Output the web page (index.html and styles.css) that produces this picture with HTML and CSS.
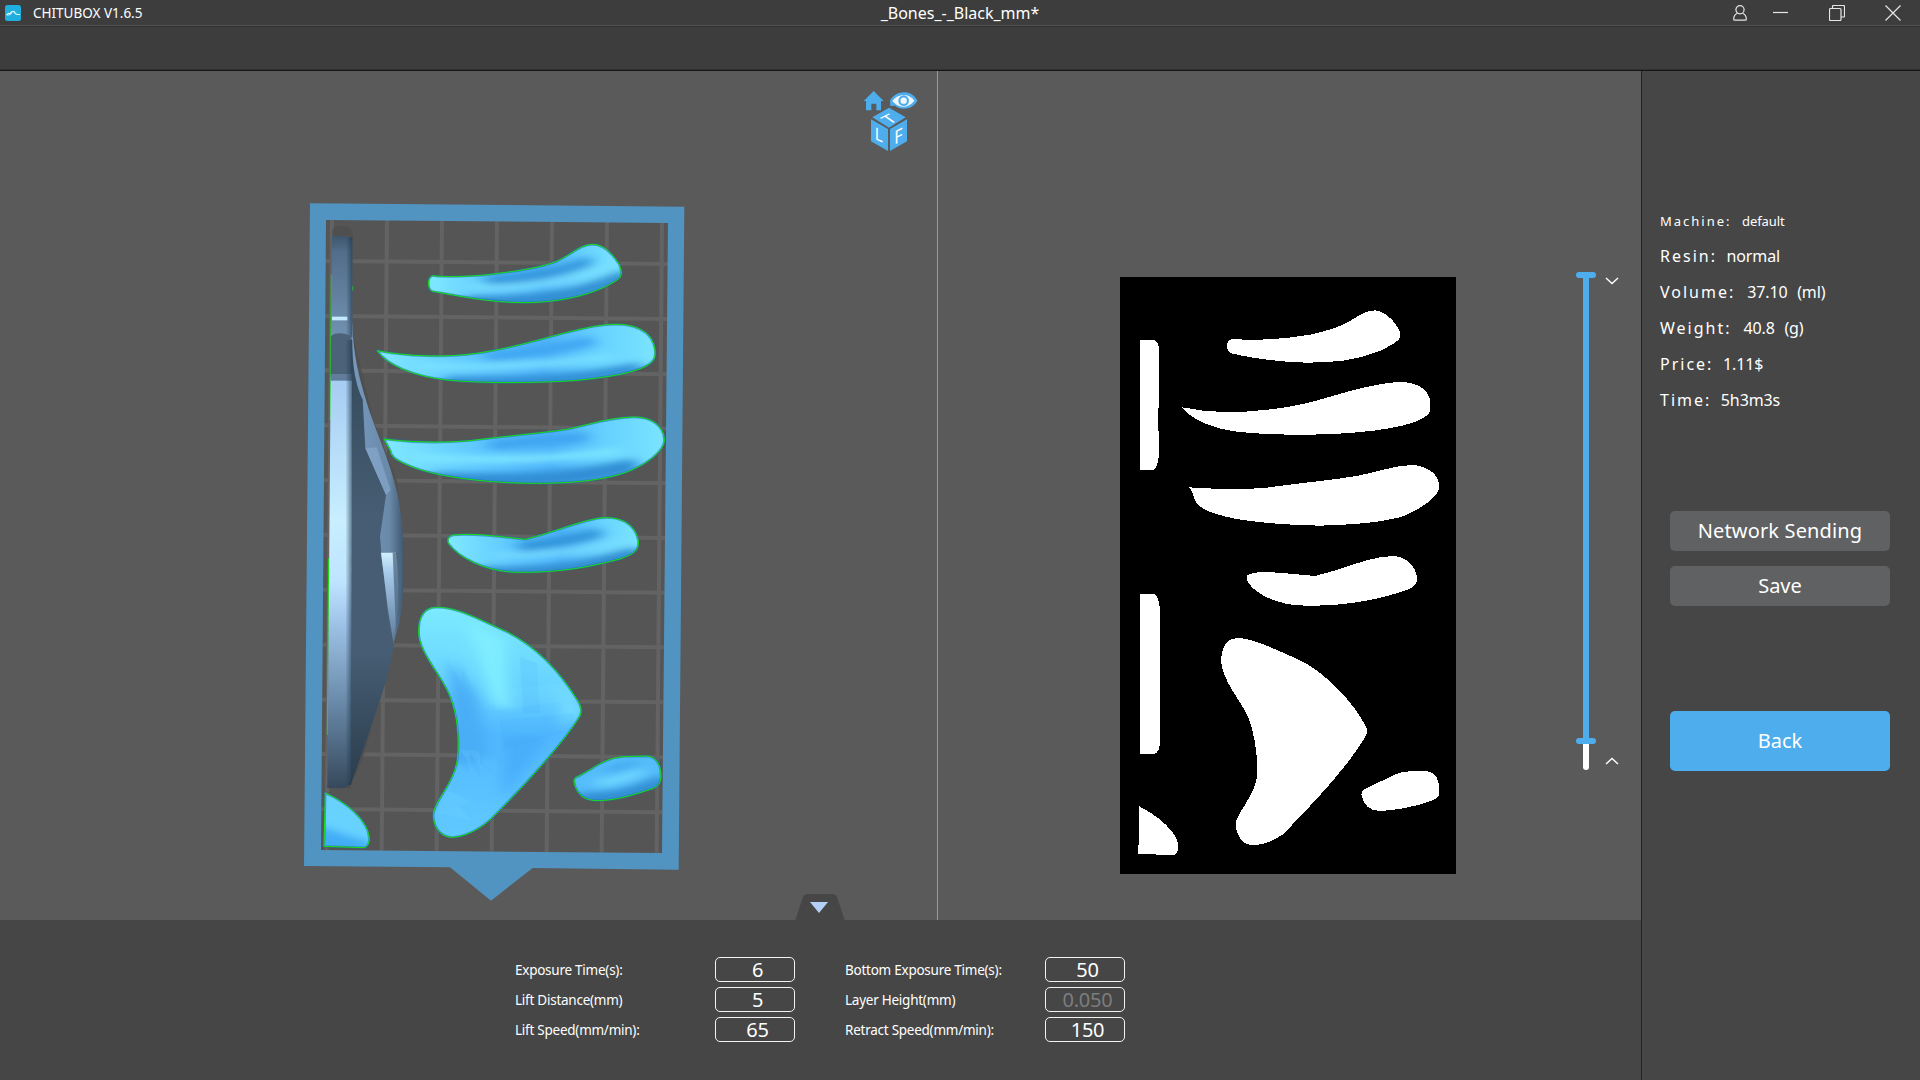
FILE: index.html
```html
<!DOCTYPE html>
<html lang="en">
<head>
<meta charset="utf-8">
<title>CHITUBOX V1.6.5</title>
<link rel="stylesheet" href="styles.css">
</head>
<body>
<div class="app">
  <header class="titlebar">
    <div class="brand">
      <svg width="16" height="16" viewBox="0 0 16 16"><rect width="16" height="16" rx="2.500" fill="#20aede"/><path d="M1.500 10l2-1.500 1.500.3 1.500-2 2.500-.3 1.500 2.300 2 .7h2.500" fill="none" stroke="#e8fbff" stroke-width="1.200"/><path d="M2.500 10.500l3-1 1.500-1.500" fill="none" stroke="#bfeefb" stroke-width=".8"/></svg>
      <span>CHITUBOX V1.6.5</span>
    </div>
    <div class="document">_Bones_-_Black_mm*</div>
    <div class="window-buttons">
      <svg class="user" width="14" height="16" viewBox="0 0 14 16"><circle cx="7" cy="4.700" r="4.100"/><path d="M4.500 8.300C2 9.300.7 11.200.7 14.300c0 .6.300.9.900.9h10.800c.6 0 .9-.3.900-.9 0-3.100-1.300-5-3.800-6"/></svg>
      <svg class="minimize" width="15" height="16" viewBox="0 0 15 16"><path d="M0 7.500h15"/></svg>
      <svg class="restore" width="16" height="16" viewBox="0 0 16 16"><path d="M.5 4.500q0-1 1-1h9.500q1 0 1 1V14.500q0 1-1 1H1.500q-1 0-1-1zM3.500 3V1.500q0-1 1-1h10q1 0 1 1v9.500q0 1-1 1H12"/></svg>
      <svg class="close" width="16" height="16" viewBox="0 0 16 16"><path d="M.5.500l15 15M15.500.500l-15 15"/></svg>
    </div>
  </header>
  <div class="toolbar"></div>
  <div class="workspace">
    <div class="main">
      <div class="views">
        <svg class="scene" width="937" height="849" viewBox="0 71 937 849">
          <defs>
            <linearGradient id="rib" x1="0" y1="0" x2="1" y2="0"><stop offset="0" stop-color="#80e9ff"/><stop offset=".35" stop-color="#5dc6ff"/><stop offset=".6" stop-color="#4fb5fb"/><stop offset=".8" stop-color="#67d2ff"/><stop offset="1" stop-color="#7ae4ff"/></linearGradient>
            <linearGradient id="edge" x1="0" y1="0" x2="0" y2="1"><stop offset="0" stop-color="#a5ccf2"/><stop offset=".35" stop-color="#c8eeff"/><stop offset=".5" stop-color="#bfe4ff"/><stop offset=".6" stop-color="#9ec3e8"/><stop offset=".8" stop-color="#6787a6"/><stop offset="1" stop-color="#36495c"/></linearGradient>
            <linearGradient id="bevel" x1="0" y1="0" x2="1" y2="0"><stop offset="0" stop-color="#20384c" stop-opacity="0"/><stop offset="1" stop-color="#20384c" stop-opacity=".65"/></linearGradient>
            <linearGradient id="cap" x1="0" y1="0" x2="0" y2="1"><stop offset="0" stop-color="#3f566c"/><stop offset=".15" stop-color="#526d89"/><stop offset="1" stop-color="#7393b4"/></linearGradient>
            <linearGradient id="body" x1="0" y1="0" x2="0" y2="1"><stop offset="0" stop-color="#33485a"/><stop offset=".4" stop-color="#465d73"/><stop offset=".7" stop-color="#465d73"/><stop offset="1" stop-color="#2b3d4d"/></linearGradient>
            <linearGradient id="rim" x1="0" y1="0" x2="1" y2="0"><stop offset="0" stop-color="#789bbf"/><stop offset=".75" stop-color="#6989a9"/><stop offset="1" stop-color="#3f566d"/></linearGradient>
            <linearGradient id="panel" x1="0" y1="0" x2="0" y2="1"><stop offset="0" stop-color="#d1efff"/><stop offset=".25" stop-color="#a5c7e8"/><stop offset="1" stop-color="#5f7d9b"/></linearGradient>
            <linearGradient id="wing" x1="0" y1="0" x2="0" y2="1"><stop offset="0" stop-color="#7cebff"/><stop offset=".38" stop-color="#65d0ff"/><stop offset=".55" stop-color="#52b9ff"/><stop offset="1" stop-color="#60c9ff"/></linearGradient>
            <filter id="soft" x="-20%" y="-60%" width="140%" height="220%"><feGaussianBlur stdDeviation="22 9"/></filter>
            <path id="r1" d="M428 257C460 262 560 260 625 250C700 241 760 230 800 214C850 190 870 164 908 163C945 163 970 195 988 224Q1000 252 988 265C935 305 830 338 700 338C600 338 500 317 428 304C412 300 410 262 428 257Z"/>
            <path id="r2" d="M262 482C350 500 470 503 560 490C690 472 800 430 908 410C990 395 1040 405 1070 430C1090 448 1098 475 1095 498C1090 540 980 560 850 572C740 579 580 581 470 570C370 558 290 525 262 482Z"/>
            <path id="r3" d="M282 747C350 756 450 760 540 752C650 738 750 730 830 718C900 704 950 684 1028 681C1090 680 1122 712 1123 750C1123 780 1080 815 1030 838C960 870 850 880 740 880C600 880 450 862 370 832C310 808 305 800 300 780Z"/>
            <path id="r4" d="M490 1035C560 1028 640 1042 706 1048C790 1028 860 995 930 984C990 978 1035 1000 1045 1052C1048 1083 1030 1092 990 1107C920 1125 830 1147 700 1147C580 1150 500 1095 475 1060Q468 1040 490 1035Z"/>
            <path id="w" d="M440 1252C500 1250 570 1290 650 1325C740 1370 810 1445 862 1530Q880 1558 870 1578C820 1660 700 1790 615 1875C575 1918 520 1942 485 1942C450 1940 430 1910 430 1875C430 1835 490 1785 502 1710C510 1640 500 1570 482 1525C460 1460 385 1390 386 1325C386 1275 405 1252 440 1252Z"/>
            <path id="s" d="M856 1763C910 1738 940 1704 1000 1700L1070 1698C1100 1700 1113 1725 1113 1760Q1113 1785 1090 1795C1030 1815 980 1831 925 1832C880 1833 860 1810 853 1780Q850 1768 856 1763Z"/>
            <path id="q" d="M106 1809C165 1835 238 1890 238 1950Q236 1970 222 1973L102 1969Z"/>
            <clipPath id="c1"><use href="#r1"/></clipPath><clipPath id="c2"><use href="#r2"/></clipPath><clipPath id="c3"><use href="#r3"/></clipPath><clipPath id="c4"><use href="#r4"/></clipPath><clipPath id="cw"><use href="#w"/></clipPath><clipPath id="cs"><use href="#s"/></clipPath><clipPath id="cq"><use href="#q"/></clipPath>
          </defs>
          <g transform="translate(290 190) scale(.33333)">
            <path d="M108 90L1134 99L1116 1989L93 1980Z" fill="#555"/>
            <g class="grid">
              <path d="M126 90L110 1982M291 90L275 1982M456 92L440 1984M621 94L605 1984M786 95L770 1986M951 96L935 1988M1116 98L1100 1988"/>
              <path d="M106 213L1133 222M105 378L1131 387M103 541L1130 553M101 706L1129 716M100 870L1127 880M99 1034L1125 1044M98 1199L1124 1208M97 1364L1122 1372M96 1529L1120 1537M95 1692L1119 1702M94 1857L1117 1867"/>
            </g>
            <path d="M126 125Q128 108 150 108H165Q190 112 188 140V430L250 690L320 870L342 1070L312 1360L220 1700L180 1795H118Z" fill="#4e4e4e" opacity=".75"/>
            <path d="M60 40L1183 50L1166 2039L728 2034L603 2132L480 2032L42 2028ZM108 90L93 1980L1116 1989L1134 99Z" fill="#5194c1" fill-rule="evenodd"/>
            <path d="M124 255L121 690M116 1105L112 1635M188 288V302" class="contour"/>

            <path d="M187 400C190 500 210 570 225 620C250 710 300 810 322 910C350 1050 345 1190 330 1290L311 1360L182 1780H170V430Z" fill="url(#rim)"/>
            <path d="M186 455C188 540 200 590 218 628L226 775L288 915L270 1040L275 1100L294 1265L311 1360C305 1440 260 1560 230 1650L182 1785H175V455Z" fill="url(#body)"/>
            <path d="M226 775L260 772L302 900L288 915Z" fill="#8aacce" opacity=".6"/>
            <path d="M273 1088H318Q330 1180 322 1280L309 1350L292 1240Z" fill="url(#panel)"/>
            <path d="M308 1088H334Q343 1200 318 1320Z" fill="#4d6780" opacity=".75"/>
            <path d="M126 138H165Q187 138 187 162V450H123Z" fill="url(#cap)"/>
            <rect x="168" y="142" width="19" height="300" fill="url(#bevel)"/>
            <rect x="126" y="380" width="46" height="11" fill="#c5e9ff"/>
            <path d="M123 440Q128 430 150 430Q183 430 186 450L185 580H122Z" fill="#4b6279"/>
            <path d="M122 560H186L182 1765Q179 1794 160 1794H112Z" fill="url(#edge)"/>
            <path d="M122 552H186V572H122Z" fill="#617d9a"/>
            <path d="M168 450H187L182 1765Q178 1790 166 1794Z" fill="url(#bevel)"/>

            <g clip-path="url(#c1)"><use href="#r1" fill="url(#rib)"/><g class="sheen" filter="url(#soft)"><path d="M600 270Q780 260 890 215" stroke="#3497dd" stroke-width="32"/><path d="M540 335Q830 345 1000 258" stroke="#318ed2" stroke-width="38"/><path d="M540 290Q760 305 960 228" stroke="#7be2ff" stroke-width="16"/></g></g>
            <g clip-path="url(#c2)"><use href="#r2" fill="url(#rib)"/><g class="sheen" filter="url(#soft)"><path d="M600 500Q750 485 900 455" stroke="#3fa6f2" stroke-width="30"/><path d="M480 575Q800 585 1040 535" stroke="#3190d6" stroke-width="34"/><path d="M380 528Q700 538 960 500" stroke="#7ae2ff" stroke-width="19"/></g></g>
            <g clip-path="url(#c3)"><use href="#r3" fill="url(#rib)"/><g class="sheen" filter="url(#soft)"><path d="M610 765Q740 752 880 742" stroke="#3fa4f0" stroke-width="30"/><path d="M440 870Q800 885 1020 830" stroke="#318fd6" stroke-width="48"/><path d="M370 802Q700 820 980 785" stroke="#7de6ff" stroke-width="22"/></g></g>
            <g clip-path="url(#c4)"><use href="#r4" fill="url(#rib)"/><g class="sheen" filter="url(#soft)"><path d="M700 1070Q820 1055 920 1030" stroke="#3294da" stroke-width="32"/><path d="M580 1150Q820 1160 1030 1092" stroke="#318ed2" stroke-width="42"/><path d="M620 1095Q820 1100 1010 1055" stroke="#78deff" stroke-width="16"/></g></g>
            <g clip-path="url(#cw)"><use href="#w" fill="url(#wing)"/><g filter="url(#soft)"><path d="M480 1400L560 1520L600 1700L480 1730Z" fill="#48adf6"/><path d="M530 1290L640 1350L660 1560L610 1540Z" fill="#80eeff"/><path d="M640 1640L780 1640L640 1830Z" fill="#4aaefb"/><path d="M800 1460L880 1560L820 1620Z" fill="#74dcff"/></g>
              <g fill="#83e8ff" opacity=".13"><path d="M615 1500L860 1475V1530L615 1560ZM480 1420L515 1475V1425L550 1490V1380L470 1350ZM510 1680L540 1725V1690L570 1730V1690L600 1730L560 1680ZM470 1800L545 1835L510 1850L545 1890L440 1870Z"/></g>
              <g fill="#379eee" opacity=".1"><path d="M630 1590L850 1570V1620L640 1680ZM500 1700L535 1750V1720L570 1760V1720L620 1760L560 1700ZM690 1400L700 1570H750L740 1420Z"/></g></g>
            <g clip-path="url(#cs)"><use href="#s" fill="#55bdfb"/><g class="sheen" filter="url(#soft)"><path d="M880 1830Q1000 1835 1110 1780" stroke="#318fd4" stroke-width="48"/><path d="M960 1738Q1000 1730 1030 1720" stroke="#42a8ee" stroke-width="20"/><path d="M930 1778Q1000 1770 1050 1745" stroke="#78e0ff" stroke-width="18"/></g></g>
            <g clip-path="url(#cq)"><use href="#q" fill="#68d2ff"/><path d="M60 1900L250 1960L220 2010H60Z" fill="#42adf5" filter="url(#soft)"/></g>
            <g class="shade"><use href="#r1"/><use href="#r2"/><use href="#r3"/><use href="#r4"/><use href="#w"/><use href="#s"/><use href="#q"/></g>
            <g class="contour"><use href="#r1"/><use href="#r2"/><use href="#r3"/><use href="#r4"/><use href="#w"/><use href="#s"/><use href="#q"/></g>
          </g>
          <g transform="translate(800 0) scale(.33333)">
            <path d="M221 273L251 303H243V331H229V311H214V331H198V303H191Z" fill="#4eaded"/>
            <path d="M270 302C284 273 333 264 352 302C335 333 299 329 285 317L271 318Z" fill="#4eaded"/>
            <path d="M277 303C292 281 327 277 343 302C326 324 300 325 284 310Z" fill="#f0f6fa"/>
            <circle cx="311" cy="302" r="16" fill="#4eaded"/><circle cx="311" cy="302" r="9.500" fill="#f0f6fa"/>
            <path d="M267 323L317 352L267 383L217 352ZM213 358L264 387V453L213 424ZM321 358L270 387V453L321 424Z" fill="#4eaded"/>
            <g class="cube-label">
              <text transform="matrix(1.080 -.54 .87 .62 268 374)">T</text>
              <text transform="matrix(1 .45 0 1.100 224 417)">L</text>
              <text transform="matrix(1.050 -.52 0 1.220 283 434)">F</text>
            </g>
          </g>
        </svg>
        <div class="slice-view">
          <svg class="slice" width="336" height="597" viewBox="30 21 1008 1791" shape-rendering="crispEdges">
            <rect x="30" y="21" width="1008" height="1791"/>
            <g fill="#fff">
              <path d="M91 210H132Q146 214 147 240L145 480L148 500V540Q145 590 132 600H91Z"/>
              <path d="M91 972H132Q148 980 150 1025V1420Q148 1445 134 1452H91Z"/>
              <path d="M365 207C440 212 520 208 600 194C650 184 690 170 720 153C750 136 765 121 795 121C825 122 870 165 871 197C871 215 840 226 812 242C740 272 670 278 590 278C520 277 430 266 364 250C346 243 346 212 365 207Z"/>
              <path d="M216 412C290 428 370 430 440 422C570 412 640 385 720 363C780 348 830 336 875 336C930 338 960 365 961 400C961 425 962 430 940 444C880 480 720 492 600 494C500 495 400 490 350 480C290 468 235 440 216 412Z"/>
              <path d="M237 652C310 657 400 660 470 653C560 640 670 630 740 618C810 604 860 585 908 585C955 588 990 615 988 655C985 680 925 724 870 742C800 760 720 764 630 767C540 766 440 758 370 745C320 735 265 718 255 690C250 675 245 660 237 652Z"/>
              <path d="M410 918C425 903 470 905 530 910L615 918L680 900C740 880 800 858 850 858C890 860 921 890 921 930Q922 945 895 958C840 978 760 1000 650 1006C590 1008 540 1008 510 996C460 985 405 945 410 918Z"/>
              <path d="M388 1104C430 1106 500 1140 560 1166C650 1206 735 1305 768 1370Q775 1385 765 1402C710 1495 600 1610 520 1692C480 1720 450 1726 420 1725C395 1722 375 1690 377 1660C380 1630 440 1570 442 1510C443 1450 432 1390 418 1350C400 1300 333 1230 333 1170C337 1125 350 1105 388 1104Z"/>
              <path d="M760 1560L855 1513C880 1503 910 1503 945 1503C980 1505 988 1530 988 1570Q985 1585 965 1592C910 1612 860 1620 810 1623C780 1623 760 1605 754 1575Q754 1564 760 1560Z"/>
              <path d="M88 1609C140 1635 204 1685 205 1730Q204 1752 192 1755L85 1752Z"/>
            </g>
          </svg>
          <div class="slider">
            <i class="thumb"></i><i class="range"></i><i class="thumb"></i><i class="rest"></i>
          </div>
          <div class="steps">
            <svg width="14" height="8" viewBox="0 0 14 8"><path d="M1 1l6 5.500 6-5.500"/></svg>
            <svg width="14" height="8" viewBox="0 0 14 8"><path d="M1 7l6-5.500 6 5.500"/></svg>
          </div>
        </div>
      </div>
      <div class="params">
        <svg class="tab" width="50" height="28" viewBox="0 0 50 28"><path d="M0 28L8 4Q9.500 1 13 1H37Q40.500 1 42 4L50 28Z" fill="#464646"/><path d="M15 9h18l-9 11z" fill="#b4d0f7"/></svg>
        <span>Exposure Time(s):</span><b>6</b><span>Bottom Exposure Time(s):</span><b>50</b>
        <span>Lift Distance(mm)</span><b>5</b><span>Layer Height(mm)</span><b class="disabled">0.050</b>
        <span>Lift Speed(mm/min):</span><b>65</b><span>Retract Speed(mm/min):</span><b>150</b>
      </div>
    </div>
    <aside class="sidebar">
      <dl class="info">
        <div class="small"><dt>Machine:</dt><dd>default</dd></div>
        <div><dt>Resin:</dt><dd>normal</dd></div>
        <div class="wide"><dt>Volume:</dt><dd>37.10</dd><dd>(ml)</dd></div>
        <div class="wide"><dt>Weight:</dt><dd>40.8</dd><dd>(g)</dd></div>
        <div><dt>Price:</dt><dd>1.11$</dd></div>
        <div><dt>Time:</dt><dd>5h3m3s</dd></div>
      </dl>
      <div class="actions">
        <button class="wide-label">Network Sending</button>
        <button>Save</button>
        <button class="back">Back</button>
      </div>
    </aside>
  </div>
</div>
</body>
</html>
```
FILE: styles.css
```css
* { box-sizing: border-box; }
body { margin: 0; background: #3d3d3d; color: #fff; font-family: "Noto Sans", sans-serif; overflow: hidden; }
svg { display: block; flex: none; }
.app { width: 1920px; height: 1080px; display: flex; flex-direction: column; }

.titlebar { height: 27px; display: grid; grid-template-columns: 1fr auto 1fr; background: #3d3d3d; border-bottom: 1px solid #323232; box-shadow: inset 0 -1px #515151; }
.brand { display: flex; gap: 12px; padding: 5px 0 0 5px; font-size: 13.5px; line-height: 16px; }
.document { font-size: 16px; line-height: 26px; }
.window-buttons { display: flex; justify-content: flex-end; padding: 5px 19px 0 0; }
.window-buttons svg { fill: none; stroke: #e6e6e6; stroke-width: 1.2; }
.minimize { margin-left: 26px; }
.restore { margin-left: 41px; }
.close { margin-left: 40px; }
.toolbar { height: 44px; background: #3d3d3d; border-bottom: 1px solid #161616; box-shadow: inset 0 -1px #303030; }

.workspace { flex: 1; display: flex; min-height: 0; }
.main { width: 1641px; display: flex; flex-direction: column; }
.views { height: 849px; display: flex; background: #5a5a5a; }
.grid { fill: none; stroke: #636363; stroke-width: 12; }
.contour { fill: none; stroke: #18e010; stroke-width: 3; }
.shade { fill: none; stroke: #236fae; stroke-width: 7; stroke-opacity: .6; }
.sheen { fill: none; stroke-linecap: round; }
.cube-label { fill: #fff; font: 400 46px "Noto Sans", sans-serif; }

.slice-view { flex: 1; display: flex; align-items: flex-start; border-left: 1px solid #999; }
.slice { margin: 206px 0 0 182px; }
.slider { width: 20px; height: 498px; margin: 201px 0 0 120px; display: flex; flex-direction: column; align-items: center; }
.thumb { width: 20px; height: 6px; border-radius: 3px; background: #4eaded; }
.range { width: 6px; height: 460px; background: #4eaded; }
.rest { width: 6px; flex: 1; border-radius: 0 0 3px 3px; background: #fff; }
.steps { height: 488px; margin: 206px 0 0 9px; display: flex; flex-direction: column; justify-content: space-between; fill: none; stroke: #fff; stroke-width: 1.4; }

.params { position: relative; flex: 1; display: grid; grid-template-columns: 200px 80px 250px 80px; grid-auto-rows: 25px; row-gap: 5px; padding: 37px 0 0 515px; background: #464646; font-size: 13.5px; line-height: 26px; letter-spacing: -.25px; }
.params span:nth-of-type(even) { padding-left: 50px; white-space: nowrap; }
.params b { border: 1px solid #f2f2f2; border-radius: 5px; padding-left: 5px; text-align: center; font-size: 20px; font-weight: 400; line-height: 23px; }
.params .disabled { color: #7d7d7d; }
.tab { position: absolute; left: 795px; top: -27px; }

.sidebar { flex: 1; background: #464646; border-left: 1px solid #222; padding: 132px 0 0 18px; }
.info { margin: 0; font-size: 16px; line-height: 34px; }
.info div { display: flex; height: 36px; }
.info dt { letter-spacing: 2px; margin-right: 9.5px; }
.info dd { margin: 0 9.5px 0 0; letter-spacing: -.1px; }
.info .small { font-size: 13px; line-height: 37px; }
.info .small dt { margin-right: 10.5px; }
.info .wide dt { margin-right: 12px; }
.actions { display: flex; flex-direction: column; gap: 15px; width: 220px; margin: 92px 0 0 10px; }
.actions button { height: 40px; padding: 0; border: 0; border-radius: 5px; background: #606163; color: #fff; font: 20px/38px "Noto Sans", sans-serif; }
.actions .wide-label { letter-spacing: .15px; }
.actions .back { height: 60px; margin-top: 90px; background: #4eaded; }
```
